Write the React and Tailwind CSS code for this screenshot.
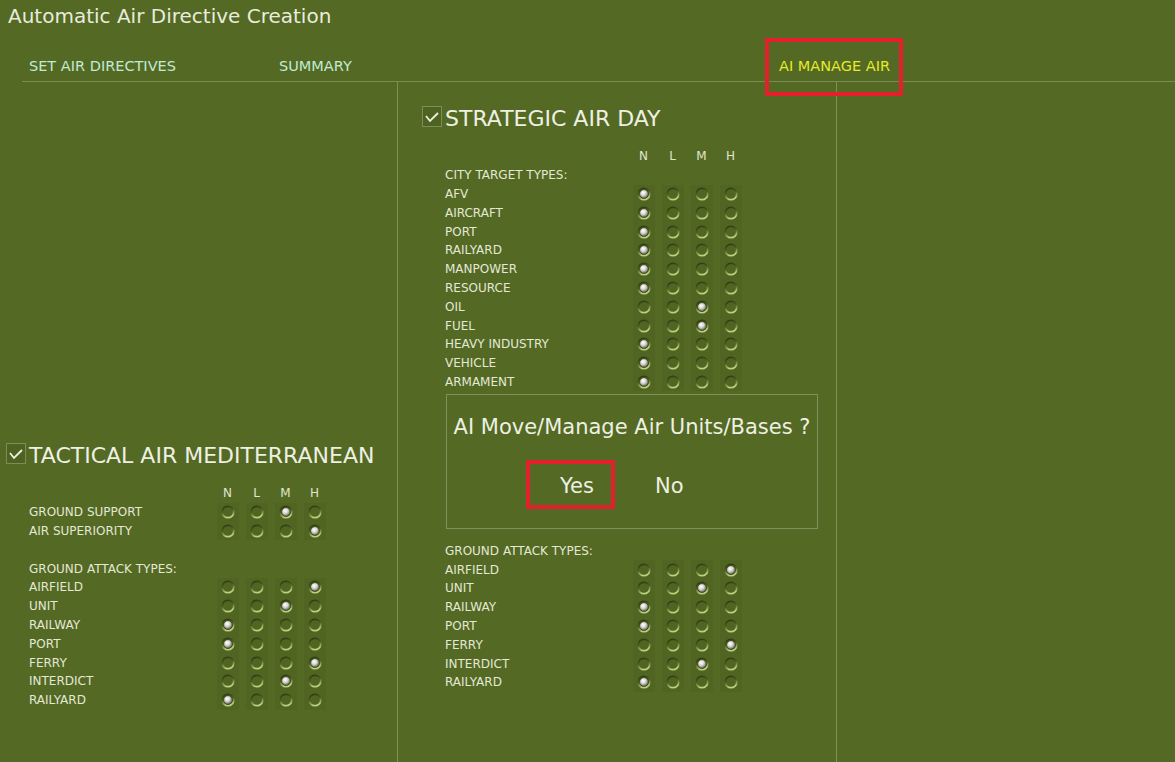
import React from 'react'

const FONT = { fontFamily: '"DejaVu Sans", Verdana, sans-serif' }

const CITY_TARGETS = [
  ['AFV', 0],
  ['AIRCRAFT', 0],
  ['PORT', 0],
  ['RAILYARD', 0],
  ['MANPOWER', 0],
  ['RESOURCE', 0],
  ['OIL', 2],
  ['FUEL', 2],
  ['HEAVY INDUSTRY', 0],
  ['VEHICLE', 0],
  ['ARMAMENT', 0],
]

const GROUND_ATTACK = [
  ['AIRFIELD', 3],
  ['UNIT', 2],
  ['RAILWAY', 0],
  ['PORT', 0],
  ['FERRY', 3],
  ['INTERDICT', 2],
  ['RAILYARD', 0],
]

const MISSIONS = [
  ['GROUND SUPPORT', 2],
  ['AIR SUPERIORITY', 3],
]

function Radio({ on }) {
  return (
    <svg width="14" height="14" viewBox="0 0 14 14">
      <defs>
        <linearGradient id="ring" x1="0" y1="0" x2="0.3" y2="1">
          <stop offset="0" stopColor="#2a3510" />
          <stop offset="0.5" stopColor="#4a5d1e" />
          <stop offset="1" stopColor="#bdd07e" />
        </linearGradient>
        <radialGradient id="ball" cx="0.4" cy="0.35" r="0.7">
          <stop offset="0" stopColor="#ffffff" />
          <stop offset="0.45" stopColor="#d6d6d0" />
          <stop offset="1" stopColor="#55574c" />
        </radialGradient>
      </defs>
      <circle cx="7" cy="7" r="5.7" fill="none" stroke="url(#ring)" strokeWidth="1.7" />
      {on && <circle cx="7" cy="7" r="4.3" fill="url(#ball)" stroke="#2b3212" strokeWidth="0.6" />}
    </svg>
  )
}

function Row({ label, value }) {
  return (
    <div className="grid h-[18.8px] grid-cols-[184px_repeat(4,29px)] items-center">
      <span className="text-[12px] leading-none text-[#e4e8d4]">{label}</span>
      {[0, 1, 2, 3].map((i) => (
        <div key={i} className="flex h-full justify-center">
          <div className="flex h-full w-[22px] items-center justify-center bg-black/[0.03]">
            <Radio on={value === i} />
          </div>
        </div>
      ))}
    </div>
  )
}

function Label({ children }) {
  return (
    <div className="flex h-[18.8px] items-center text-[12px] leading-none text-[#e4e8d4]">
      {children}
    </div>
  )
}

function LevelHeader() {
  return (
    <div className="grid h-[18.8px] grid-cols-[184px_repeat(4,29px)] items-center text-[12px] leading-none text-[#e0e5cf]">
      <span />
      {['N', 'L', 'M', 'H'].map((l) => (
        <span key={l} className="text-center">
          {l}
        </span>
      ))}
    </div>
  )
}

function SectionTitle({ children }) {
  return (
    <div className="flex h-[24px] items-center gap-[3px]">
      <div className="mb-[5px] flex h-[21px] w-[20px] items-center justify-center border border-[#7c8d55] bg-black/[0.05]">
        <svg width="16" height="14" viewBox="0 0 16 14">
          <polyline
            points="2,6 6,11 14,3"
            fill="none"
            stroke="#eef0e2"
            strokeWidth="1.8"
          />
        </svg>
      </div>
      <span className="text-[22px] leading-none text-[#eef0e2]">{children}</span>
    </div>
  )
}

export default function App() {
  return (
    <div
      className="flex h-[762px] w-[1175px] flex-col overflow-hidden bg-[#536924]"
      style={FONT}
    >
      <div className="flex h-[31px] items-center pl-2 text-[20px] leading-none text-[#e9ecdc]">
        Automatic Air Directive Creation
      </div>

      <div className="flex h-[50px] items-center pl-[29px] pt-[20px] text-[14.5px] leading-[20px]">
        <span className="w-[250px] text-[#c2ead3]">SET AIR DIRECTIVES</span>
        <span className="w-[500px] text-[#c2ead3]">SUMMARY</span>
        <span className="relative text-[#e6ea2c]">
          AI MANAGE AIR
          <span className="absolute -bottom-[20px] -left-[14px] -right-[13px] -top-[18px] border-4 border-[#e3202c]" />
        </span>
      </div>

      <div className="ml-[22px] h-px bg-[#7b8c50]" />

      <div className="flex flex-1">
        <div className="w-[398px] border-r border-[#7f9058] pl-[6px] pt-[362px]">
          <SectionTitle>TACTICAL AIR MEDITERRANEAN</SectionTitle>
          <div className="ml-[23px] mt-[16px]">
            <LevelHeader />
            {MISSIONS.map(([l, v]) => (
              <Row key={l} label={l} value={v} />
            ))}
            <div className="h-[18.8px]" />
            <Label>GROUND ATTACK TYPES:</Label>
            {GROUND_ATTACK.map(([l, v]) => (
              <Row key={l} label={l} value={v} />
            ))}
          </div>
        </div>

        <div className="w-[439px] border-r border-[#7f9058] pl-[24px] pt-[25px]">
          <SectionTitle>STRATEGIC AIR DAY</SectionTitle>
          <div className="ml-[23px] mt-[16px]">
            <LevelHeader />
            <Label>CITY TARGET TYPES:</Label>
            {CITY_TARGETS.map(([l, v]) => (
              <Row key={l} label={l} value={v} />
            ))}

            <div className="ml-px mt-[3px] flex h-[135px] w-[372px] flex-col border border-[#7f9058] pt-[19px]">
              <div className="text-center text-[21px] leading-[26px] text-[#eef0e2]">
                AI Move/Manage Air Units/Bases ?
              </div>
              <div className="mt-[20px] flex items-center pl-[79px] text-[21px] leading-none text-[#eef0e2]">
                <div className="flex h-[49px] w-[89px] items-center border-4 border-[#e3202c] pl-[30px] pt-[4px]">
                  Yes
                </div>
                <div className="ml-[40px] pt-[4px]">No</div>
              </div>
            </div>

            <div className="mt-[12px]">
              <Label>GROUND ATTACK TYPES:</Label>
              {GROUND_ATTACK.map(([l, v]) => (
                <Row key={l} label={l} value={v} />
              ))}
            </div>
          </div>
        </div>

        <div className="flex-1" />
      </div>
    </div>
  )
}
